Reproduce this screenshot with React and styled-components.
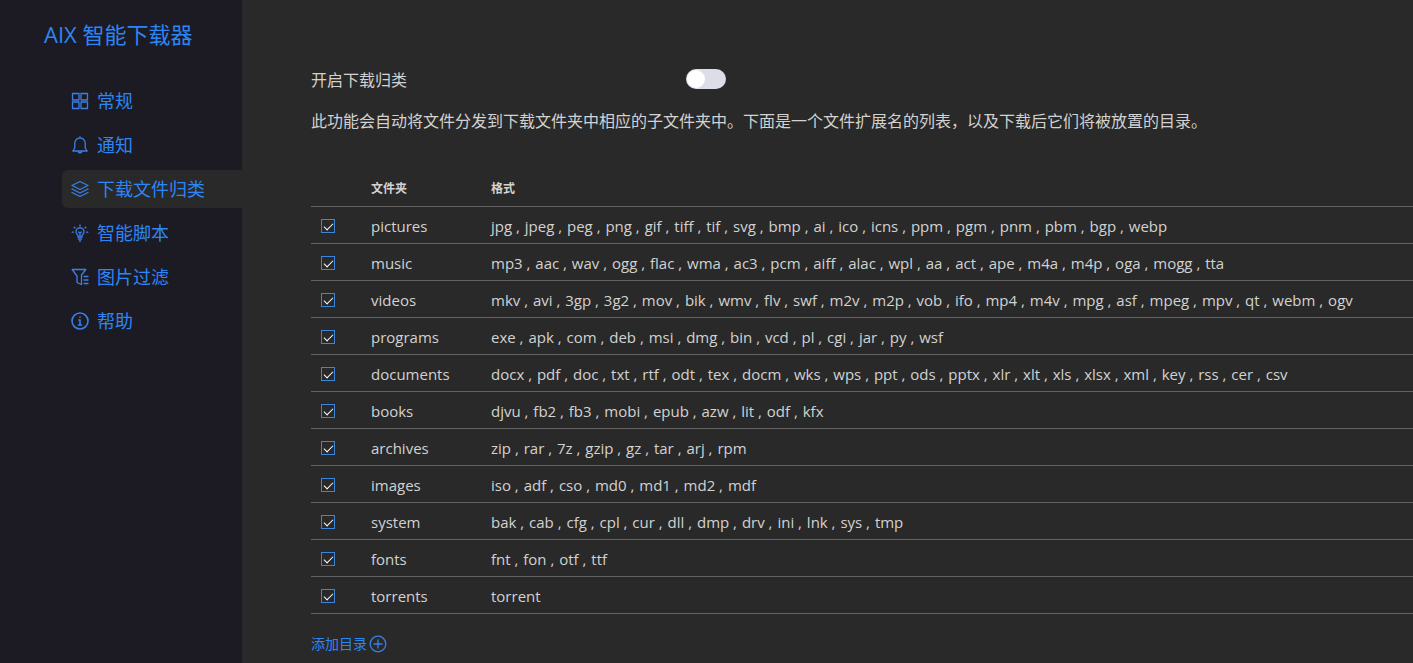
import React, { useState } from "react";
import styled, { createGlobalStyle } from "styled-components";

const GlobalStyle = createGlobalStyle`
  * {
    box-sizing: border-box;
  }
  body {
    margin: 0;
    background: #292929;
    color: #d2d2d2;
    font-family: "Open Sans", "Noto Sans CJK SC", sans-serif;
    font-size: 15px;
  }
`;

const Page = styled.div`
  display: flex;
  min-height: 100vh;
  overflow: hidden;
`;

const Sidebar = styled.aside`
  flex: 0 0 242px;
  padding-top: 19px;
  background: #1c1b23;
`;

const Brand = styled.h1`
  margin: 0 0 33px;
  padding-left: 44px;
  color: #2d86f5;
  font-size: 22px;
  font-weight: 400;
  line-height: 30px;
`;

const Menu = styled.nav`
  display: flex;
  flex-direction: column;
  gap: 6px;
  padding-left: 62px;
`;

const MenuItem = styled.a`
  display: flex;
  align-items: center;
  gap: 8px;
  height: 38px;
  padding-left: 9px;
  border-radius: 6px 0 0 6px;
  background: ${props => props.$active ? '#292929' : 'transparent'};
  color: #2d86f5;
  font-size: 18px;
  line-height: 38px;
  text-decoration: none;
`;

const Icon = styled.svg`
  flex-shrink: 0;
  width: 18px;
  height: 18px;
  fill: none;
  stroke: #3a7fe6;
  stroke-width: 1.3;
  stroke-linejoin: round;
  stroke-linecap: round;
`;

const Content = styled.main`
  flex: 1;
  min-width: 0;
  padding: 68px 0 0 69px;
`;

const SwitchRow = styled.div`
  display: flex;
  align-items: center;
  height: 22px;
`;

const SwitchLabel = styled.label`
  width: 375px;
  font-size: 16px;
`;

const Switch = styled.input`
  display: flex;
  align-items: center;
  justify-content: ${props => props.checked ? 'flex-end' : 'flex-start'};
  appearance: none;
  width: 40px;
  height: 20px;
  margin: 0;
  padding: 1px;
  border-radius: 10px;
  background: ${props => props.checked ? '#2d86f5' : '#dcdde6'};
  cursor: pointer;
  &::before {
    content: "";
    width: 18px;
    height: 18px;
    border-radius: 50%;
    background: #fff;
  }
`;

const Description = styled.p`
  margin: 19px 0 38px;
  font-size: 16px;
  line-height: 24px;
`;

const Table = styled.table`
  width: 100%;
  table-layout: fixed;
  border-collapse: separate;
  border-spacing: 0;
`;

const HeadCell = styled.th`
  width: ${props => props.$width};
  height: 36px;
  padding: 0 0 2px;
  border-bottom: 1px solid #636363;
  font-size: 12px;
  font-weight: 700;
  text-align: left;
`;

const Cell = styled.td`
  height: 37px;
  padding: 2px 0 0;
  border-bottom: 1px solid #636363;
  line-height: 20px;
  white-space: nowrap;
`;

const Format = styled.span`
  margin-right: 1px;
`;

const Checkbox = styled.input`
  display: grid;
  place-items: center;
  appearance: none;
  width: 14px;
  height: 14px;
  margin: 0 0 0 10px;
  border: 1px solid #3a86dc;
  cursor: pointer;
  &:checked::before {
    content: "";
    width: 8px;
    height: 4px;
    margin-bottom: 2px;
    border: solid #fff;
    border-width: 0 0 1px 1px;
    transform: rotate(-45deg);
  }
`;

const AddButton = styled.button`
  display: flex;
  align-items: center;
  gap: 2px;
  margin-top: 20px;
  padding: 0;
  border: 0;
  background: none;
  color: #2d86f5;
  font: inherit;
  font-size: 14px;
  line-height: 20px;
  cursor: pointer;
`;

const icons = {
  grid: (
    <>
      <rect x="1.5" y="1.5" width="6.5" height="6.5" />
      <rect x="10" y="1.5" width="6.5" height="6.5" />
      <rect x="1.5" y="10" width="6.5" height="6.5" />
      <rect x="10" y="10" width="6.5" height="6.5" />
    </>
  ),
  bell: (
    <path d="M3.8 12V7.2a5.2 5.2 0 0 1 10.4 0V12l2 3H1.8zM9 2V.8M7.2 15.2a1.8 1.8 0 0 0 3.6 0" />
  ),
  layers: (
    <path d="M9 1.5 17 5.5 9 9.5 1 5.5zM1 9l8 4 8-4M1 12.5l8 4 8-4" />
  ),
  bulb: (
    <path d="M7 13v-1.8a4 4 0 1 1 4 0V13zM7.4 15h3.2M8.4 17h1.2M9 1v1M3.2 3.2l.8.8M14.8 3.2l-.8.8M1.2 8.2h1.2M15.6 8.2h1.2M7.6 8 9 9.2 10.4 8M9 9.2V13" />
  ),
  filter: (
    <path d="M6 14.5V8L1.2 1.5h13.6L10.5 7v9.5L6 14.5M13 8.5h4M13 12h4M13 15.5h4" />
  ),
  info: (
    <>
      <circle cx="9" cy="9" r="8" strokeWidth="1.6" />
      <path d="M9 5v.3M7.8 8H9v5M7.5 13h3" strokeWidth="1.6" />
    </>
  ),
  plus: (
    <>
      <circle cx="9" cy="9" r="7.8" />
      <path d="M9 5v8M5 9h8" />
    </>
  )
};

const menu = [
  { id: "general", icon: "grid", label: "常规" },
  { id: "notice", icon: "bell", label: "通知" },
  { id: "classify", icon: "layers", label: "下载文件归类" },
  { id: "script", icon: "bulb", label: "智能脚本" },
  { id: "filter", icon: "filter", label: "图片过滤" },
  { id: "help", icon: "info", label: "帮助" }
];

const folders = [
  ["pictures", "jpg jpeg peg png gif tiff tif svg bmp ai ico icns ppm pgm pnm pbm bgp webp"],
  ["music", "mp3 aac wav ogg flac wma ac3 pcm aiff alac wpl aa act ape m4a m4p oga mogg tta"],
  ["videos", "mkv avi 3gp 3g2 mov bik wmv flv swf m2v m2p vob ifo mp4 m4v mpg asf mpeg mpv qt webm ogv"],
  ["programs", "exe apk com deb msi dmg bin vcd pl cgi jar py wsf"],
  ["documents", "docx pdf doc txt rtf odt tex docm wks wps ppt ods pptx xlr xlt xls xlsx xml key rss cer csv"],
  ["books", "djvu fb2 fb3 mobi epub azw lit odf kfx"],
  ["archives", "zip rar 7z gzip gz tar arj rpm"],
  ["images", "iso adf cso md0 md1 md2 mdf"],
  ["system", "bak cab cfg cpl cur dll dmp drv ini lnk sys tmp"],
  ["fonts", "fnt fon otf ttf"],
  ["torrents", "torrent"]
];

function FolderRow({ name, formats }) {
  const [checked, setChecked] = useState(true);
  return (
    <tr>
      <Cell>
        <Checkbox
          type="checkbox"
          aria-labelledby={"folder-" + name}
          checked={checked}
          onChange={() => setChecked(!checked)}
        />
      </Cell>
      <Cell id={"folder-" + name}>{name}</Cell>
      <Cell>
        {formats.map((format, i) => (
          <Format key={format}>{i < formats.length - 1 ? format + " , " : format}</Format>
        ))}
      </Cell>
    </tr>
  );
}

function App() {
  const [enabled, setEnabled] = useState(false);
  return (
    <Page>
      <GlobalStyle />
      <Sidebar>
        <Brand>AIX 智能下载器</Brand>
        <Menu>
          {menu.map(item => (
            <MenuItem key={item.id} href={"#" + item.id} $active={item.id === "classify"}>
              <Icon viewBox="0 0 18 18" aria-hidden="true">{icons[item.icon]}</Icon>
              {item.label}
            </MenuItem>
          ))}
        </Menu>
      </Sidebar>
      <Content>
        <SwitchRow>
          <SwitchLabel htmlFor="classify-switch">开启下载归类</SwitchLabel>
          <Switch
            id="classify-switch"
            type="checkbox"
            role="switch"
            checked={enabled}
            onChange={() => setEnabled(!enabled)}
          />
        </SwitchRow>
        <Description>
          此功能会自动将文件分发到下载文件夹中相应的子文件夹中。下面是一个文件扩展名的列表，以及下载后它们将被放置的目录。
        </Description>
        <Table>
          <thead>
            <tr>
              <HeadCell $width="60px" aria-label="启用" />
              <HeadCell $width="120px">文件夹</HeadCell>
              <HeadCell>格式</HeadCell>
            </tr>
          </thead>
          <tbody>
            {folders.map(([name, formats]) => (
              <FolderRow key={name} name={name} formats={formats.split(" ")} />
            ))}
          </tbody>
        </Table>
        <AddButton type="button">
          添加目录
          <Icon viewBox="0 0 18 18" aria-hidden="true">{icons.plus}</Icon>
        </AddButton>
      </Content>
    </Page>
  );
}

export default App;
